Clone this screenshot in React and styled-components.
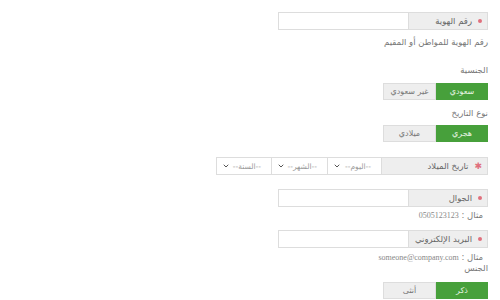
import React, { useState } from "react";
import styled, { createGlobalStyle } from "styled-components";
import { ChevronDown } from "lucide-react";

const GlobalStyle = createGlobalStyle`
  html, body {
    margin: 0;
    padding: 0;
    background: #ffffff;
  }
  body {
    font-family: "DejaVu Sans", "Noto Sans", sans-serif;
  }
`;

const Form = styled.div`
  direction: rtl;
  width: 500px;
  height: 300px;
  box-sizing: border-box;
  padding: 12px 12px 0 0;
  overflow: hidden;
  display: flex;
  flex-direction: column;
  align-items: flex-start;
  color: #666;
  font-size: 8.5px;
`;

const FieldRow = styled.div`
  display: flex;
  height: 18px;
  margin-top: ${(p) => p.$mt || 0}px;
`;

const LabelCell = styled.div`
  width: ${(p) => p.$w}px;
  box-sizing: border-box;
  background: #eeeeee;
  border: 1px solid #dddddd;
  display: flex;
  align-items: center;
  padding-right: 5px;
  gap: 6px;
  color: #666;
`;

const Dot = styled.span`
  width: 4px;
  height: 4px;
  border-radius: 50%;
  background: #e0707d;
  flex: none;
`;

const Star = styled.span`
  color: #e0707d;
  font-size: 9px;
  line-height: 1;
`;

const TextInput = styled.input`
  width: 130px;
  height: 18px;
  box-sizing: border-box;
  border: 1px solid #dddddd;
  border-right: none;
  margin: 0;
  padding: 0 4px;
  background: #fff;
  outline: none;
`;

const SelectBox = styled.div`
  width: ${(p) => p.$w}px;
  box-sizing: border-box;
  border: 1px solid #dddddd;
  border-right: none;
  background: #fff;
  display: flex;
  align-items: center;
  justify-content: space-between;
  padding: 0 10px 0 5px;
  color: #999;
  font-size: 7.5px;
  white-space: nowrap;

  svg {
    color: #555;
    flex: none;
  }
`;

const Text = styled.div`
  line-height: ${(p) => p.$lh || 12}px;
  margin-top: ${(p) => p.$mt || 0}px;
  padding-right: ${(p) => p.$indent || 0}px;
  color: #777;
  white-space: nowrap;
`;

const Latin = styled.span`
  font-family: "Liberation Serif", serif;
  font-size: 8px;
  color: #888;
`;

const Toggle = styled.div`
  display: flex;
  height: 17px;
  margin-top: ${(p) => p.$mt || 0}px;
`;

const ToggleButton = styled.button`
  width: ${(p) => p.$w || 52}px;
  height: 17px;
  margin: 0;
  padding: 0;
  font-family: inherit;
  font-size: 8px;
  font-weight: normal;
  cursor: pointer;
  border: 1px solid ${(p) => (p.$active ? "#47a03b" : "#dddddd")};
  background: ${(p) => (p.$active ? "#47a03b" : "#eeeeee")};
  color: ${(p) => (p.$active ? "#e8f5e4" : "#777")};
`;

const Segmented = ({ options, mt }) => {
  const [value, setValue] = useState(0);
  return (
    <Toggle $mt={mt}>
      {options.map((o, i) => (
        <ToggleButton
          key={o}
          $active={value === i}
          $w={i === 0 ? 52 : 53}
          onClick={() => setValue(i)}
        >
          {o}
        </ToggleButton>
      ))}
    </Toggle>
  );
};

const Select = ({ label, w }) => (
  <SelectBox $w={w}>
    <span>{label}</span>
    <ChevronDown size={8} strokeWidth={3} />
  </SelectBox>
);

const App = () => {
  return (
    <>
      <GlobalStyle />
      <Form>
        <FieldRow>
          <LabelCell $w={80}>
            <Dot />
            رقم الهوية
          </LabelCell>
          <TextInput />
        </FieldRow>
        <Text $mt={6}>رقم الهوية للمواطن أو المقيم</Text>

        <Text $mt={16}>الجنسية</Text>
        <Segmented mt={7} options={["سعودي", "غير سعودي"]} />

        <Text $mt={7}>نوع التاريخ</Text>
        <Segmented mt={6} options={["هجري", "ميلادي"]} />

        <FieldRow $mt={15}>
          <LabelCell $w={107}>
            <Star>✱</Star>
            تاريخ الميلاد
          </LabelCell>
          <Select label="--اليوم--" w={54} />
          <Select label="--الشهر--" w={56} />
          <Select label="--السنة--" w={55} />
        </FieldRow>

        <FieldRow $mt={14}>
          <LabelCell $w={80}>
            <Dot />
            الجوال
          </LabelCell>
          <TextInput />
        </FieldRow>
        <Text $mt={2} $indent={5}>
          مثال : <Latin>0505123123</Latin>
        </Text>

        <FieldRow $mt={8}>
          <LabelCell $w={80}>
            <Dot />
            البريد الإلكتروني
          </LabelCell>
          <TextInput />
        </FieldRow>
        <Text $mt={4} $lh={10} $indent={5}>
          مثال : <Latin>someone@company.com</Latin>
        </Text>
        <Text $lh={10}>الجنس</Text>
        <Segmented mt={9} options={["ذكر", "أنثى"]} />
      </Form>
    </>
  );
};

export default App;
